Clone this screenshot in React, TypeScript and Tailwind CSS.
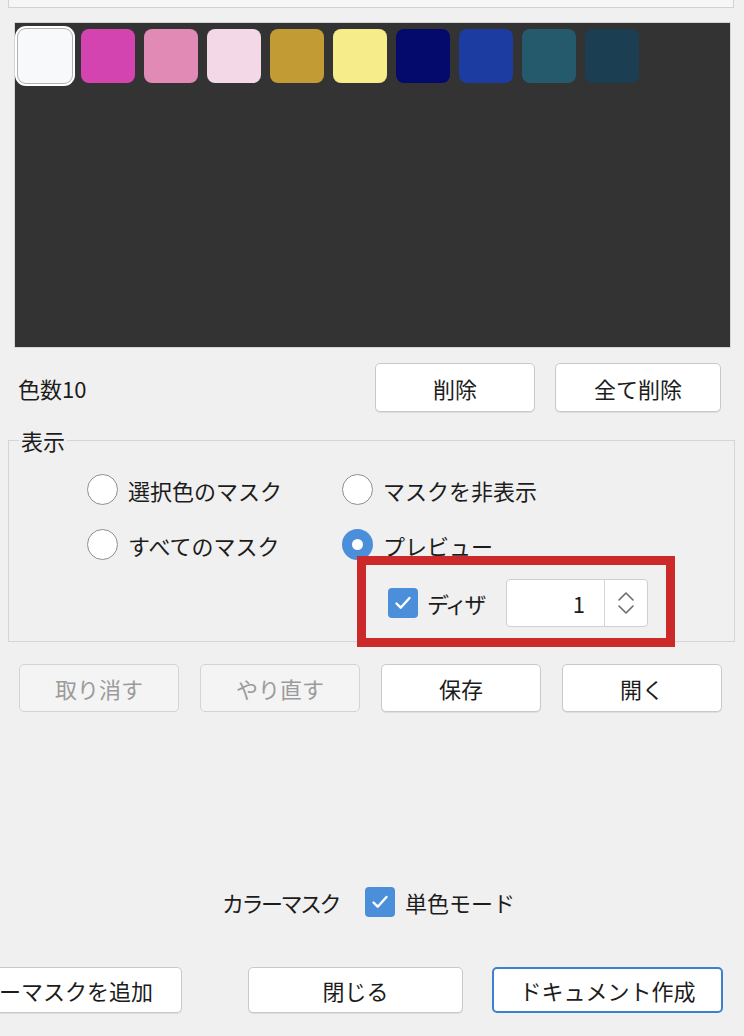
const swatches = [
  "#f7f9fb",
  "#d444b0",
  "#e08ab5",
  "#f3d9e7",
  "#c39b35",
  "#f6ec8a",
  "#030a6c",
  "#1c3ca2",
  "#245a6b",
  "#1b3e53",
];

const font = { fontFamily: '"Noto Sans CJK JP", "Noto Sans", sans-serif' };

function Btn({
  label,
  disabled,
  primary,
  className = "",
}: {
  label: string;
  disabled?: boolean;
  primary?: boolean;
  className?: string;
}) {
  const tone = disabled
    ? "border border-[#d4d4d4] bg-[#f4f4f4] text-[#9b9b9b]"
    : primary
      ? "border-2 border-[#3f7fd0] bg-white text-[#1c1c1c]"
      : "border border-[#c9c9c9] bg-white text-[#1c1c1c] shadow-[0_1px_0_rgba(0,0,0,0.08)]";
  return (
    <div
      className={`flex shrink-0 items-center justify-center rounded-[5px] text-[22px] leading-[30px] ${tone} ${className}`}
    >
      {label}
    </div>
  );
}

function Radio({ label, checked }: { label: string; checked?: boolean }) {
  return (
    <div className="flex items-center gap-[10px]">
      {checked ? (
        <span className="flex h-[31px] w-[31px] items-center justify-center rounded-full bg-[#4b8fda]">
          <span className="h-[11px] w-[11px] rounded-full bg-white" />
        </span>
      ) : (
        <span className="h-[31px] w-[31px] rounded-full border-[1.5px] border-[#8f8f8f] bg-white" />
      )}
      <span className="text-[22px] leading-[30px] text-[#1c1c1c]">{label}</span>
    </div>
  );
}

function Check() {
  return (
    <span className="flex h-[30px] w-[30px] items-center justify-center rounded-[4px] bg-[#4b8fda]">
      <svg width="20" height="20" viewBox="0 0 20 20" fill="none">
        <path d="M3.5 10.5l4.2 4.2L16.5 5" stroke="white" strokeWidth="2.4" strokeLinecap="round" strokeLinejoin="round" />
      </svg>
    </span>
  );
}

export default function App() {
  return (
    <div className="relative h-[1036px] w-[744px] overflow-hidden bg-[#f0f0f0] text-[#1c1c1c]" style={font}>
      <div className="ml-[8px] h-[8px] w-[726px] border-x border-b border-[#d2d2d2] bg-[#f6f6f6]" />

      <div className="ml-[15px] mt-[15px] flex h-[324px] w-[715px] gap-[9px] bg-[#333333] pl-[3px] pt-[6px] shadow-[0_0_0_1px_#d6d6d6]">
        {swatches.map((c, i) => (
          <div
            key={i}
            className={`h-[54px] w-[54px] shrink-0 rounded-[8px] ${i === 0 ? "shadow-[0_0_0_1px_#b0b0b0,0_0_0_3px_#ffffff]" : ""}`}
            style={{ background: c }}
          />
        ))}
      </div>

      <div className="mt-[16px] flex h-[49px] items-center pr-[23px]">
        <span className="flex-1 pl-[18px] text-[22px] leading-[30px]">色数10</span>
        <Btn label="削除" className="h-[49px] w-[160px]" />
        <Btn label="全て削除" className="ml-[20px] h-[49px] w-[166px]" />
      </div>

      <fieldset className="ml-[8px] mt-[13px] h-[217px] w-[727px] border border-[#d5d5d5]">
        <legend className="ml-[10px] px-[2px] text-[22px] leading-[30px]">表示</legend>
        <div className="pt-[7px]">
          <div className="flex h-[55px] items-center pl-[78px]">
            <div className="w-[255px]">
              <Radio label="選択色のマスク" />
            </div>
            <Radio label="マスクを非表示" />
          </div>
          <div className="flex h-[55px] items-center pl-[78px]">
            <div className="w-[255px]">
              <Radio label="すべてのマスク" />
            </div>
            <Radio label="プレビュー" checked />
          </div>
          <div className="flex h-[62px] items-center pl-[379px]">
            <Check />
            <span className="ml-[9px] text-[22px] leading-[30px] tracking-[-2.5px]">ディザ</span>
            <div className="ml-[22px] flex h-[48px] w-[142px] rounded-[4px] border border-[#cfcfcf] bg-white">
              <div className="flex flex-1 items-center justify-end pr-[19px] text-[22px]">1</div>
              <div className="flex w-[43px] items-center justify-center border-l border-[#d6d6d6]">
                <svg width="20" height="30" viewBox="0 0 20 30" fill="none">
                  <path d="M3 12l7-7 7 7M3 18l7 7 7-7" stroke="#6b6b6b" strokeWidth="1.6" strokeLinecap="round" strokeLinejoin="round" />
                </svg>
              </div>
            </div>
          </div>
        </div>
      </fieldset>

      <div className="mt-[22px] flex gap-[21px] pl-[19px]">
        <Btn label="取り消す" disabled className="h-[48px] w-[160px]" />
        <Btn label="やり直す" disabled className="h-[48px] w-[160px]" />
        <Btn label="保存" className="h-[48px] w-[160px]" />
        <Btn label="開く" className="h-[48px] w-[160px]" />
      </div>

      <div className="mt-[175px] flex h-[30px] items-center pl-[222px]">
        <span className="text-[22px] leading-[30px] tracking-[-2.5px]">カラーマスク</span>
        <span className="ml-[26px]">
          <Check />
        </span>
        <span className="ml-[10px] text-[22px] leading-[30px]">単色モード</span>
      </div>

      <div className="mt-[50px] flex">
        <Btn label="カラーマスクを追加" className="ml-[-74px] h-[46px] w-[256px]" />
        <Btn label="閉じる" className="ml-[66px] h-[46px] w-[215px]" />
        <Btn label="ドキュメント作成" primary className="ml-[29px] h-[46px] w-[231px]" />
      </div>

      <div className="pointer-events-none absolute left-[357px] top-[556px] h-[91px] w-[318px] border-[9px] border-[#cc2a2a]" />
    </div>
  );
}
